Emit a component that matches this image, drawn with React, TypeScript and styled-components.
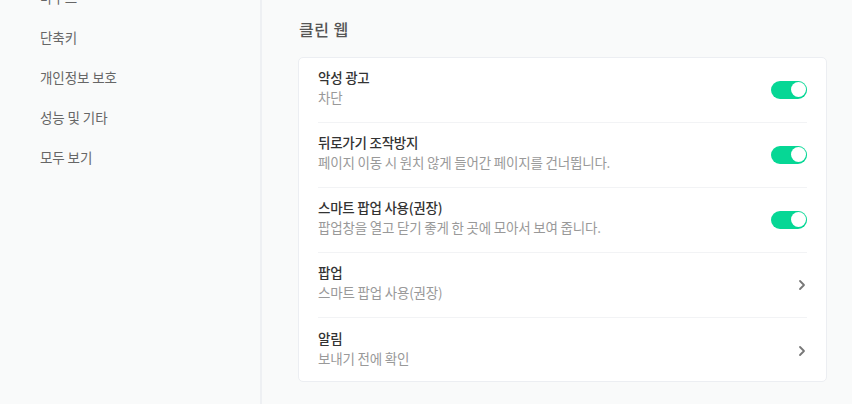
import styled, { createGlobalStyle } from "styled-components"

const GlobalStyle = createGlobalStyle`
  html, body {
    margin: 0;
    padding: 0;
    background: #f9fafa;
    font-family: "Noto Sans CJK KR", "Noto Sans", sans-serif;
    overflow: hidden;
  }
`

const Page = styled.div`
  display: flex;
  width: 852px;
  height: 404px;
  overflow: hidden;
`

const Sidebar = styled.nav`
  width: 262px;
  flex-shrink: 0;
  border-right: 2px solid #eef0f3;
  display: flex;
  flex-direction: column;
  padding-left: 40px;
  box-sizing: border-box;
`

const NavList = styled.div`
  display: flex;
  flex-direction: column;
  margin-top: -23px;
`

const NavItem = styled.div`
  height: 40px;
  line-height: 40px;
  font-size: 13.5px;
  color: #666;
  letter-spacing: -0.1px;
`

const Main = styled.main`
  flex: 1;
  padding: 17px 25px 0 36px;
  box-sizing: border-box;
`

const Heading = styled.h2`
  margin: 0 0 16px 1px;
  font-size: 16px;
  font-weight: 500;
  color: #555;
  line-height: 24px;
  letter-spacing: 0.5px;
`

const Card = styled.section`
  background: #fff;
  border: 1.5px solid #eceef2;
  border-radius: 5px;
  padding: 0 19px;
`

const Row = styled.div<{ $last?: boolean }>`
  display: flex;
  align-items: center;
  height: ${(p) => (p.$last ? "63px" : "65px")};
  padding-bottom: ${(p) => (p.$last ? "3px" : "6px")};
  box-sizing: border-box;
  border-bottom: ${(p) => (p.$last ? "none" : "1.5px solid #f2f3f5")};
`

const Texts = styled.div`
  flex: 1;
  display: flex;
  flex-direction: column;
`

const Title = styled.div`
  font-size: 13.5px;
  font-weight: 500;
  color: #333;
  line-height: 20px;
  letter-spacing: -0.25px;
`

const Sub = styled.div`
  font-size: 13.5px;
  color: #999;
  line-height: 20px;
  letter-spacing: -0.2px;
`

const Toggle = styled.div<{ $on: boolean }>`
  width: 36px;
  height: 18px;
  border-radius: 9px;
  background: ${(p) => (p.$on ? "#06d795" : "#ccc")};
  display: flex;
  align-items: center;
  justify-content: ${(p) => (p.$on ? "flex-end" : "flex-start")};
  padding: 0 1.5px;
  box-sizing: border-box;
  margin-top: 5px;
`

const Knob = styled.div`
  width: 15px;
  height: 15px;
  border-radius: 50%;
  background: #fff;
  box-shadow: 0 0 0 1px rgba(6, 215, 149, 0.35);
`

const ChevronBox = styled.svg`
  margin: 5px 1px 0 0;
`

const Chevron = () => (
  <ChevronBox width="8" height="12" viewBox="0 0 8 12">
    <path d="M2 2 L6 6 L2 10" fill="none" stroke="#777" strokeWidth="1.8" strokeLinecap="round" strokeLinejoin="round" />
  </ChevronBox>
)

const navItems = ["마우스", "단축키", "개인정보 보호", "성능 및 기타", "모두 보기"]

const rows = [
  { title: "악성 광고", sub: "차단", kind: "toggle" },
  { title: "뒤로가기 조작방지", sub: "페이지 이동 시 원치 않게 들어간 페이지를 건너뜁니다.", kind: "toggle" },
  { title: "스마트 팝업 사용(권장)", sub: "팝업창을 열고 닫기 좋게 한 곳에 모아서 보여 줍니다.", kind: "toggle" },
  { title: "팝업", sub: "스마트 팝업 사용(권장)", kind: "link" },
  { title: "알림", sub: "보내기 전에 확인", kind: "link" },
]

export default function App() {
  return (
    <Page>
      <GlobalStyle />
      <Sidebar>
        <NavList>
          {navItems.map((n) => (
            <NavItem key={n}>{n}</NavItem>
          ))}
        </NavList>
      </Sidebar>
      <Main>
        <Heading>클린 웹</Heading>
        <Card>
          {rows.map((r, i) => (
            <Row key={r.title} $last={i === rows.length - 1}>
              <Texts>
                <Title>{r.title}</Title>
                <Sub>{r.sub}</Sub>
              </Texts>
              {r.kind === "toggle" ? (
                <Toggle $on>
                  <Knob />
                </Toggle>
              ) : (
                <Chevron />
              )}
            </Row>
          ))}
        </Card>
      </Main>
    </Page>
  )
}
